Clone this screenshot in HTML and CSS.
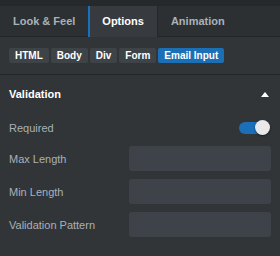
FILE: index.html
```html
<!DOCTYPE html>
<html lang="en">
<head>
    <meta charset="UTF-8">
    <meta name="viewport" content="width=device-width, initial-scale=1.0">
    <title>Options</title>
    <link rel="stylesheet" href="styles.css">
</head>
<body>
    <div class="strip"></div>
    <div class="tabs">
        <div class="tab">Look &amp; Feel</div>
        <div class="tab active">Options</div>
        <div class="tab">Animation</div>
        <div class="tab-fill"></div>
    </div>

    <div class="crumbs">
        <span class="chip">HTML</span>
        <span class="chip">Body</span>
        <span class="chip">Div</span>
        <span class="chip">Form</span>
        <span class="chip current">Email Input</span>
    </div>

    <div class="section">
        <div class="section-head">
            <span>Validation</span>
            <span class="caret"></span>
        </div>
        <div class="section-body">
            <div class="row toggle-row">
                <label>Required</label>
                <div class="toggle on"><span class="knob"></span></div>
            </div>
            <div class="row">
                <label for="max-length">Max Length</label>
                <input type="text" id="max-length">
            </div>
            <div class="row">
                <label for="min-length">Min Length</label>
                <input type="text" id="min-length">
            </div>
            <div class="row">
                <label for="pattern">Validation Pattern</label>
                <input type="text" id="pattern">
            </div>
        </div>
    </div>
</body>
</html>
```

FILE: styles.css
```css
body {
    font-family: "Liberation Sans", Arial, sans-serif;
    background-color: #313538;
    color: #a9b1b8;
    margin: 0;
    width: 280px;
    height: 256px;
    overflow: hidden;
}

.strip {
    height: 6px;
    background-color: #26292c;
}

.tabs {
    display: flex;
    height: 30px;
    background-color: #2c3033;
    border-bottom: 1px solid #222528;
}

.tab {
    padding: 0 13px 0 13px;
    line-height: 30px;
    font-size: 11px;
    font-weight: bold;
    color: #aab2b9;
}

.tab.active {
    color: #ffffff;
    background-color: #373b3f;
    border-left: 2px solid #1a70bd;
    border-right: 1px solid #25282b;
    padding-left: 12px;
    height: 31px;
}

.tab-fill {
    flex: 1;
}

.crumbs {
    display: flex;
    gap: 2px;
    padding: 11px 9px 11px 9px;
}

.chip {
    height: 15px;
    line-height: 15px;
    padding: 0 6px;
    font-size: 10px;
    font-weight: bold;
    color: #ffffff;
    background-color: #3e4348;
    border-radius: 2px;
}

.chip.current {
    background-color: #1a6fb5;
}

.section {
    border-top: 1px solid #24272a;
}

.section-head {
    display: flex;
    align-items: center;
    justify-content: space-between;
    height: 38px;
    padding: 0 11px 0 9px;
    font-size: 11px;
    font-weight: bold;
    color: #ffffff;
}

.caret {
    width: 0;
    height: 0;
    border-left: 4.5px solid transparent;
    border-right: 4.5px solid transparent;
    border-bottom: 5px solid #ffffff;
}

.section-body {
    display: flex;
    flex-direction: column;
    gap: 8px;
    padding: 7px 9px 0 9px;
}

.row {
    display: flex;
    align-items: center;
    justify-content: space-between;
    font-size: 11px;
}

.toggle-row {
    height: 16px;
    margin-bottom: 2px;
}

.row input {
    width: 142px;
    height: 25px;
    box-sizing: border-box;
    border: none;
    border-radius: 3px;
    background-color: #3e4349;
    color: #ffffff;
    padding: 0 8px;
    font-family: inherit;
}

.toggle {
    position: relative;
    width: 28px;
    height: 12px;
    margin-right: 4px;
    border-radius: 6px;
    background-color: #1a6fb8;
}

.knob {
    position: absolute;
    top: -2px;
    left: 16px;
    width: 15px;
    height: 15px;
    border-radius: 50%;
    background-color: #e9e9e9;
    box-shadow: 0 1px 2px rgba(0, 0, 0, 0.5);
}
```
